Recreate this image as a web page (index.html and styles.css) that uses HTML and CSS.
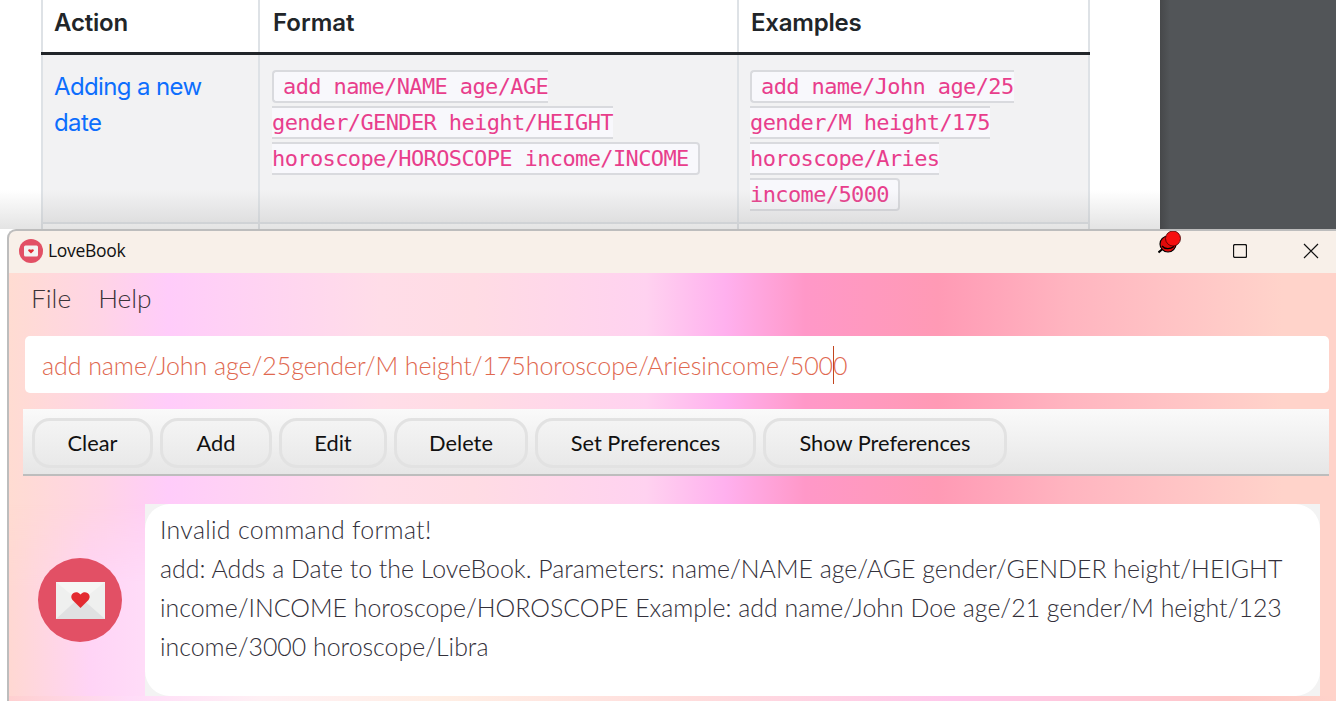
FILE: index.html
```html
<!DOCTYPE html>
<html lang="en">
<head>
<meta charset="utf-8">
<title>LoveBook</title>
<link rel="stylesheet" href="styles.css">
</head>
<body>
<div class="desktop">
  <main class="doc">
    <table class="cmd-table">
      <thead>
        <tr><th class="c1">Action</th><th class="c2">Format</th><th class="c3">Examples</th></tr>
      </thead>
      <tbody>
        <tr>
          <td class="action"><a class="link">Adding a new date</a></td>
          <td class="format"><code>add name/NAME age/AGE gender/GENDER height/HEIGHT horoscope/HOROSCOPE income/INCOME</code></td>
          <td class="examples"><code>add name/John age/25 gender/M height/175 horoscope/Aries income/5000</code></td>
        </tr>
        <tr class="next"><td></td><td></td><td></td></tr>
      </tbody>
    </table>
    <div class="doc-fade"></div>
  </main>
  <aside class="dark"></aside>

  <section class="window">
    <header class="titlebar">
      <svg class="app-icon" viewBox="0 0 24 24" width="24" height="24">
        <circle cx="12" cy="12" r="12" fill="#e25065"/>
        <rect x="5" y="6.500" width="14" height="11" rx="1.500" fill="#f3f3f1"/>
        <path d="M12 14.400 9.400 12c-1-1.300.9-2.700 2.600-1.200 1.700-1.500 3.600-.1 2.600 1.200z" fill="#e22c33"/>
      </svg>
      <span class="app-name">LoveBook</span>
      <svg class="pin" viewBox="0 0 24 24" width="24" height="24">
        <path d="M0.500 22.500 5 18.500" stroke="#000" stroke-width="2"/>
        <circle cx="10" cy="14" r="8" fill="#e00a0a" stroke="#000" stroke-width="1.200"/>
        <circle cx="15" cy="8.500" r="7.500" fill="#f60f0f" stroke="#400" stroke-width=".8"/>
        <path d="M4 16c3 3.500 8 3.500 12 .5" stroke="#000" stroke-width="1.300" fill="none"/>
      </svg>
      <svg class="win-btn max" viewBox="0 0 14 14" width="14" height="14">
        <rect x="0.500" y="0.500" width="13" height="13" rx="1.500" fill="none" stroke="#111" stroke-width="1.300"/>
      </svg>
      <svg class="win-btn close" viewBox="0 0 16 16" width="16" height="16">
        <path d="M1 1 15 15M15 1 1 15" stroke="#111" stroke-width="1.200" fill="none"/>
      </svg>
    </header>
    <div class="content">
      <nav class="menu"><span>File</span><span>Help</span></nav>
      <div class="command">
        <span class="cmd-text">add name/John age/25gender/M height/175horoscope/Ariesincome/500</span><span class="cmd-last">0</span>
      </div>
      <div class="toolbar">
        <button class="w-clear">Clear</button>
        <button class="w-add">Add</button>
        <button class="w-edit">Edit</button>
        <button class="w-delete">Delete</button>
        <button class="w-set">Set Preferences</button>
        <button class="w-show">Show Preferences</button>
      </div>
      <div class="result-row">
        <svg class="avatar" viewBox="0 0 84 84" width="84" height="84">
          <circle cx="42" cy="42" r="42" fill="#e25065"/>
          <rect x="18" y="24" width="49" height="37" fill="#eff0ef"/>
          <path d="M18 61 42 39 67 61z" fill="#e0e1e2"/>
          <path d="M18 24 42 44 67 24z" fill="#f6f6f5"/>
          <path d="M42.500 50 34.500 42c-4-5 3-11 8-5.500 5-5.500 12 .5 8 5.500z" fill="#e32a30"/>
        </svg>
        <div class="result">
          <div class="result-body">
            <p class="headline">Invalid command format!</p>
            <p>add: Adds a Date to the LoveBook. Parameters: name/NAME age/AGE gender/GENDER height/HEIGHT income/INCOME horoscope/HOROSCOPE Example: add name/John Doe age/21 gender/M height/123 income/3000 horoscope/Libra</p>
          </div>
        </div>
      </div>
    </div>
  </section>
</div>
</body>
</html>
```
FILE: styles.css
```css
* { box-sizing: border-box; }
html, body { margin: 0; height: 100%; overflow: hidden; }
.desktop { position: relative; display: flex; width: 1336px; height: 701px; overflow: hidden; background: #fff; }
.doc { position: relative; width: 1160px; padding-left: 41px; background: #fff; font-family: Inter, "Liberation Sans", sans-serif; }
.dark { flex: 1; background: linear-gradient(90deg, #46484a, #525558 10px); }
.cmd-table { border-collapse: collapse; table-layout: fixed; width: 1048px; color: #212529; }
.c1 { width: 217px; } .c2 { width: 479px; } .c3 { width: 351px; }
th, td { border: 2px solid #dee2e6; border-top: 0; padding: 0 12px; vertical-align: top; text-align: left; }
th { height: 53px; font-size: 24px; font-weight: 600; border-bottom: 3px solid #212529; letter-spacing: -.2px; vertical-align: middle; padding-bottom: 7px; }
th.c1 { padding-left: 11px; }
th.c2 { padding-left: 13px; letter-spacing: 0; }
tbody td { background: #f2f2f3; height: 170px; padding-top: 14px; font-size: 24px; line-height: 36px; }
tbody td.action { padding-left: 11px; }
tbody td.format { padding-right: 30px; }
tbody td.examples { padding-left: 11px; }
.next td { height: 20px; padding: 0; background: #fff; border-top: 2px solid #d4d7db; }
.link { color: #0d6efd; font-size: 24px; letter-spacing: -.62px; font-weight: 400; }
code { font-family: "DejaVu Sans Mono", monospace; font-size: 22px; line-height: 36px; vertical-align: top; color: #e83e8c; background: #f8f8fc; border: 2px solid #d9dade; border-radius: 4px; padding: 2px 9px; -webkit-box-decoration-break: slice; box-decoration-break: slice; letter-spacing: -.62px; }
.doc-fade { position: absolute; left: 0; right: 0; top: 190px; height: 39px; background: linear-gradient(180deg, rgba(190,190,190,0), rgba(170,170,170,.32)); }

.window { position: absolute; left: 7px; top: 229px; right: 0; bottom: 0; background: #f8f0e9; border-left: 2px solid #bdbdbd; border-top: 2px solid #bdbdbd; border-top-left-radius: 9px; display: flex; flex-direction: column; overflow: hidden; }
.titlebar { flex: none; height: 42px; display: flex; align-items: center; padding: 0 0 5px 10px; font-family: "Open Sans", "Liberation Sans", sans-serif; position: relative; }
.app-icon { margin-top: 2px; }
.app-name { margin-left: 5px; font-size: 17.500px; color: #111; letter-spacing: -.3px; }
.pin { margin-left: auto; margin-right: 51px; margin-bottom: 15px; }
.win-btn { margin-top: 2px; }
.win-btn.max { margin-right: 56px; }
.win-btn.close { margin-right: 17px; }

.content { flex: 1; display: flex; flex-direction: column; font-family: Lato, "Open Sans", sans-serif; font-weight: 300; background: linear-gradient(90deg, #ffdcd2 0, #ffd4e6 7%, #ffccfa 12%, #ffdde8 28%, #ffdce4 35%, #ffd2f0 48%, #ffb0ee 54%, #ff98c8 60%, #ff9ab5 70%, #ffb5c0 80%, #ffd3ca 96%, #ffd3ca 100%); }
.menu { height: 57px; display: flex; align-items: center; padding: 0 0 8px 22px; gap: 27px; font-size: 26.300px; color: #3b3338; }
.command { margin: 6px 7px 0 16px; height: 57px; background: #fff; border-radius: 5px; display: flex; align-items: center; padding-left: 17px; font-size: 25px; color: #e0684f; letter-spacing: -.07px; white-space: nowrap; }
.cmd-text { line-height: 36px; }
.cmd-last { position: relative; line-height: 36px; }
.cmd-last::before { content: ""; position: absolute; left: 0; top: -1px; height: 38px; width: 1px; background: #c2461f; }
.toolbar { margin: 16px 7px 0 14px; height: 67px; display: flex; align-items: center; gap: 7px; padding: 2px 0 0 9px; background: linear-gradient(180deg, #fafafa, #e6e6e6); border-bottom: 2px solid #bdbdbd; }
.toolbar button { height: 50px; border: 3px solid #e2e2e2; border-radius: 18px; background: linear-gradient(180deg, #f4f4f4, #e9e9e9); font-family: Lato, "Open Sans", sans-serif; font-weight: 400; font-size: 21.800px; color: #111; padding: 0; }
.w-clear { width: 121px; } .w-add { width: 112px; } .w-edit { width: 108px; } .w-delete { width: 134px; } .w-set { width: 221px; } .w-show { width: 244px; }
.result-row { flex: 1; display: flex; align-items: flex-start; padding: 28px 16px 0 136px; position: relative; }
.result-row::before { content: ""; position: absolute; left: 0; top: 0; bottom: 0; width: 136px; background: linear-gradient(90deg, #ffd8d2, #ffd4f6 60%, #ffdcf8); -webkit-mask-image: linear-gradient(180deg, transparent 28px, #000 110px); mask-image: linear-gradient(180deg, transparent 28px, #000 110px); }
.result-row::after { content: ""; position: absolute; left: 0; right: 0; bottom: 0; height: 5px; background: linear-gradient(90deg, #ffd0d0 0, #ffdcf8 9%, #fff0f4 19%, #ffeee4 33%, #ffdcdc 52%, #ffc8ec 71%, #ffc8dc 81%, #ffc8c8 92%, #ffd3ca 100%); }
.avatar { position: absolute; left: 29px; top: 82px; z-index: 1; }
.result { flex: 1; height: 192px; background: #f3f3f3; position: relative; z-index: 1; }
.result-body { height: 100%; background: #fff; border-radius: 25px; padding: 6px 15px; font-size: 24.900px; line-height: 39px; color: #33303a; }
.result-body p { margin: 0; }
.result-body .headline { letter-spacing: .3px; }
```
